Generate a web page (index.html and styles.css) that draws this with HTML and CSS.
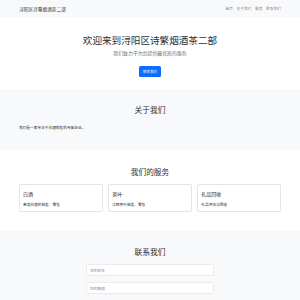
FILE: index.html
```html
<!DOCTYPE html>
<html lang="zh-CN">
<head>
    <meta charset="UTF-8">
    <meta name="viewport" content="width=device-width, initial-scale=1.0">
    <title>浔阳区诗繁烟酒茶二部</title>
    <link rel="stylesheet" href="styles.css">
</head>
<body>
    <nav class="navbar">
        <span class="brand">浔阳区诗繁烟酒茶二部</span>
        <div class="nav-links">
            <a href="#">首页</a>
            <a href="#about">关于我们</a>
            <a href="#services">服务</a>
            <a href="#contact">联系我们</a>
        </div>
    </nav>

    <header class="hero">
        <h1>欢迎来到浔阳区诗繁烟酒茶二部</h1>
        <p class="lead">我们致力于为您提供最优质的服务</p>
        <a href="#contact" class="btn">联系我们</a>
    </header>

    <section id="about" class="section gray">
        <h2>关于我们</h2>
        <p class="about-text">我们是一家专注于白酒销售的专营企业。</p>
    </section>

    <section id="services" class="section">
        <h2>我们的服务</h2>
        <div class="service-grid">
            <div class="service-card">
                <h3>白酒</h3>
                <p>各类白酒的批发、零售</p>
            </div>
            <div class="service-card">
                <h3>茶叶</h3>
                <p>江西茶叶批发、零售</p>
            </div>
            <div class="service-card">
                <h3>礼品回收</h3>
                <p>礼品评估与回收</p>
            </div>
        </div>
    </section>

    <section id="contact" class="section gray">
        <h2>联系我们</h2>
        <form class="contact-form">
            <input type="text" class="form-input" placeholder="您的姓名">
            <input type="email" class="form-input" placeholder="您的邮箱">
            <textarea class="form-input form-textarea" placeholder="您的留言"></textarea>
        </form>
    </section>
</body>
</html>
```

FILE: styles.css
```css
* {
    margin: 0;
    padding: 0;
    box-sizing: border-box;
}

body {
    font-family: "Noto Sans", "Noto Sans CJK SC", sans-serif;
    color: #212529;
    background: #fff;
}

.navbar {
    height: 17px;
    padding: 0 19px;
    display: flex;
    align-items: center;
    justify-content: space-between;
    background-color: #f8f9fa;
}

.brand {
    font-size: 4.7px;
    line-height: 6px;
    color: rgba(0, 0, 0, 0.85);
}

.nav-links {
    display: flex;
    gap: 3.5px;
}

.nav-links a {
    font-size: 3.75px;
    line-height: 5px;
    color: rgba(0, 0, 0, 0.55);
    text-decoration: none;
}

.hero {
    height: 72px;
    padding-top: 18px;
    text-align: center;
}

.hero h1 {
    font-size: 9.6px;
    line-height: 12px;
    font-weight: 400;
    color: #2b2f33;
}

.lead {
    margin-top: 3px;
    font-size: 4.9px;
    line-height: 6px;
    color: #6c757d;
}

.btn {
    display: inline-block;
    margin-top: 7px;
    width: 22px;
    height: 11px;
    line-height: 11px;
    font-size: 3.5px;
    color: #fff;
    background-color: #0d6efd;
    border-radius: 1.5px;
    text-decoration: none;
}

.section {
    padding: 16px 19px 19px;
}

.section h2 {
    text-align: center;
    font-size: 7.7px;
    line-height: 10px;
    font-weight: 400;
    color: #2b2f33;
}

.gray {
    background-color: #f8f9fa;
}

#about {
    height: 61px;
}

.about-text {
    margin-top: 9.5px;
    font-size: 3.7px;
    line-height: 5px;
}

#services {
    padding-top: 16.5px;
}

.service-grid {
    margin-top: 7.5px;
    display: grid;
    grid-template-columns: repeat(3, 1fr);
    gap: 5.5px;
}

.service-card {
    height: 28px;
    padding: 6px 3px 0;
    border: 1px solid rgba(0, 0, 0, 0.1);
    border-radius: 2px;
    background: #fff;
}

.service-card h3 {
    font-size: 5px;
    line-height: 6px;
    font-weight: 400;
}

.service-card p {
    margin-top: 4.5px;
    font-size: 3.7px;
    line-height: 5px;
}

.contact-form {
    width: 128px;
    margin: 7px auto 0;
    display: flex;
    flex-direction: column;
    gap: 6px;
}

.form-input {
    display: block;
    width: 100%;
    height: 12px;
    padding: 0 3px;
    font-family: inherit;
    font-size: 3.75px;
    border: 1px solid #e9ecef;
    border-radius: 2px;
    background: #fff;
    outline: none;
    resize: none;
}

.form-input::placeholder {
    color: #8a9096;
}

.form-textarea {
    height: 30px;
    padding-top: 3px;
}
```
